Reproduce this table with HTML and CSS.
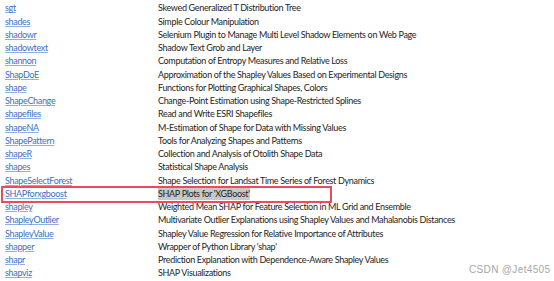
FILE: index.html
```html
<!DOCTYPE html>
<html>
<head>
<meta charset="utf-8">
<link rel="stylesheet" href="styles.css">
</head>
<body>
<div class="list">
  <div class="row"><a href="#">sgsR</a><span class="desc">Structurally Guided Sampling</span></div>
  <div class="row"><a href="#">sgt</a><span class="desc">Skewed Generalized T Distribution Tree</span></div>
  <div class="row"><a href="#">shades</a><span class="desc">Simple Colour Manipulation</span></div>
  <div class="row"><a href="#">shadowr</a><span class="desc">Selenium Plugin to Manage Multi Level Shadow Elements on Web Page</span></div>
  <div class="row"><a href="#">shadowtext</a><span class="desc">Shadow Text Grob and Layer</span></div>
  <div class="row"><a href="#">shannon</a><span class="desc">Computation of Entropy Measures and Relative Loss</span></div>
  <div class="row"><a href="#">ShapDoE</a><span class="desc">Approximation of the Shapley Values Based on Experimental Designs</span></div>
  <div class="row"><a href="#">shape</a><span class="desc">Functions for Plotting Graphical Shapes, Colors</span></div>
  <div class="row"><a href="#">ShapeChange</a><span class="desc">Change-Point Estimation using Shape-Restricted Splines</span></div>
  <div class="row"><a href="#">shapefiles</a><span class="desc">Read and Write ESRI Shapefiles</span></div>
  <div class="row"><a href="#">shapeNA</a><span class="desc">M-Estimation of Shape for Data with Missing Values</span></div>
  <div class="row"><a href="#">ShapePattern</a><span class="desc">Tools for Analyzing Shapes and Patterns</span></div>
  <div class="row"><a href="#">shapeR</a><span class="desc">Collection and Analysis of Otolith Shape Data</span></div>
  <div class="row"><a href="#">shapes</a><span class="desc">Statistical Shape Analysis</span></div>
  <div class="row"><a href="#">ShapeSelectForest</a><span class="desc">Shape Selection for Landsat Time Series of Forest Dynamics</span></div>
  <div class="row marked"><a href="#">SHAPforxgboost</a><span class="desc"><span class="sel">SHAP Plots for 'XGBoost'</span></span><span class="box"></span></div>
  <div class="row"><a href="#">shapley</a><span class="desc">Weighted Mean SHAP for Feature Selection in ML Grid and Ensemble</span></div>
  <div class="row"><a href="#">ShapleyOutlier</a><span class="desc">Multivariate Outlier Explanations using Shapley Values and Mahalanobis Distances</span></div>
  <div class="row"><a href="#">ShapleyValue</a><span class="desc">Shapley Value Regression for Relative Importance of Attributes</span></div>
  <div class="row"><a href="#">shapper</a><span class="desc">Wrapper of Python Library 'shap'</span></div>
  <div class="row"><a href="#">shapr</a><span class="desc">Prediction Explanation with Dependence-Aware Shapley Values</span></div>
  <div class="row"><a href="#">shapviz</a><span class="desc">SHAP Visualizations</span></div>
</div>
<div class="mark">CSDN @Jet4505</div>
</body>
</html>
```

FILE: styles.css
```css
html, body {
  margin: 0;
  padding: 0;
  background: #ffffff;
  overflow: hidden;
}
body {
  width: 554px;
  height: 281px;
  position: relative;
  font-family: "Lato", "Noto Sans", sans-serif;
  font-size: 9px;
  letter-spacing: -0.33px;
  color: #222222;
}
.list {
  margin-top: -12px;
  display: flex;
  flex-direction: column;
}
.row {
  position: relative;
  display: flex;
  height: 13.25px;
  line-height: 13.25px;
  white-space: nowrap;
}
.row a {
  flex: 0 0 153px;
  padding-left: 5px;
  color: #3a6fc4;
  text-decoration: underline;
  text-decoration-color: #8fb0e0;
  text-underline-offset: 1px;
}
.desc {
  flex: 0 0 auto;
  color: #1e1e1e;
}
.sel {
  background: #c8c8c8;
  padding: 1px 0;
}
.box {
  position: absolute;
  left: 1px;
  top: -1px;
  width: 331px;
  height: 17px;
  border: 2px solid #ec4a5d;
  box-sizing: border-box;
}
.mark {
  position: absolute;
  left: 469px;
  top: 264px;
  white-space: nowrap;
  font-size: 10px;
  letter-spacing: 0.35px;
  color: #a8a8a8;
  font-family: "Liberation Sans", "Noto Sans", sans-serif;
}
```
